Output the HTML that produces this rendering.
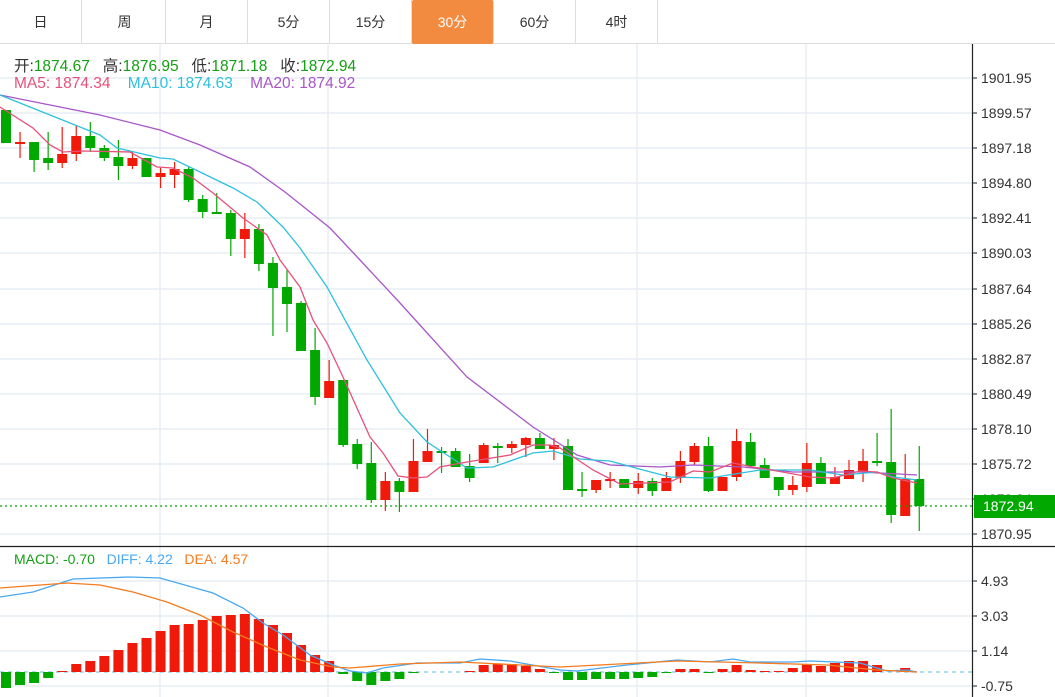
<!DOCTYPE html>
<html><head><meta charset="utf-8"><style>
body{margin:0;width:1055px;height:697px;overflow:hidden;background:#fff;font-family:"Liberation Sans","Noto Sans CJK SC",sans-serif;position:relative}
.tabs{position:absolute;left:0;top:0;height:44px;width:1055px;border-bottom:1px solid #ddd;box-sizing:border-box}
.tab{position:absolute;top:0;height:44px;width:82px;border-right:1px solid #ddd;box-sizing:border-box;text-align:center;line-height:44px;font-size:14px;color:#333}
.tab.on{background:#f28b3f;color:#fff;border-radius:2px}
svg{position:absolute;left:0;top:0}
.lab{position:absolute;font-size:14px;white-space:nowrap}
</style></head><body>
<div class="tabs">
<div class="tab" style="left:0">日</div><div class="tab" style="left:84px">周</div><div class="tab" style="left:166px">月</div><div class="tab" style="left:248px">5分</div><div class="tab" style="left:330px">15分</div><div class="tab on" style="left:412px">30分</div><div class="tab" style="left:494px">60分</div><div class="tab" style="left:576px">4时</div><div class="tab" style="left:658px;border-right:none"></div>
</div>
<svg id="s" width="1055" height="697" viewBox="0 0 1055 697"></svg>
<div class="lab" style="left:14px;top:54px;color:#333;font-size:15.5px">开:<span style="color:#14a014">1874.67</span>&nbsp;&nbsp; 高:<span style="color:#14a014">1876.95</span>&nbsp;&nbsp; 低:<span style="color:#14a014">1871.18</span>&nbsp;&nbsp; 收:<span style="color:#14a014">1872.94</span></div>
<div class="lab" style="left:14px;top:75px;color:#e8507a;font-size:15.5px">MA5: 1874.34&nbsp;&nbsp;&nbsp; <span style="color:#2ec0dc">MA10: 1874.63</span>&nbsp;&nbsp;&nbsp; <span style="color:#a855c8">MA20: 1874.92</span></div>
<div class="lab" style="left:14px;top:551px;color:#14a014">MACD: -0.70&nbsp;&nbsp; <span style="color:#4aa8f0">DIFF: 4.22</span>&nbsp;&nbsp; <span style="color:#f57b20">DEA: 4.57</span></div>
<script>
var s='';
var hl=[78,113,148,183,218,253,289,324,359,394,429,464,499,534];
hl.forEach(function(y){s+='<line x1="0" x2="972" y1="'+y+'" y2="'+y+'" stroke="#e6edf3" stroke-width="1.5"/>';});
[581,616,651,686].forEach(function(y){s+='<line x1="0" x2="972" y1="'+y+'" y2="'+y+'" stroke="#e6edf3" stroke-width="1.5"/>';});
[160,328,637,806].forEach(function(x){s+='<line x1="'+x+'" x2="'+x+'" y1="44" y2="697" stroke="#e6edf3" stroke-width="1.5"/>';});
var C=[['g',110,143,110,143],['r',142,144,132,158],['g',142,160,142,172],['g',158,163,132,170],['r',154,163,127,168],['r',136,154,126,161],['g',136,148,122,152],['g',148,158,145,161],['g',157,166,140,180],['r',158,166,151,169],['g',158,177,158,177],['r',173,177,168,188],['r',169,175,162,188],['g',169,200,167,202],['g',199,212,195,218],['g',212,214,193,214],['g',213,239,210,256],['r',229,239,213,258],['g',229,264,224,271],['g',263,288,257,336],['g',287,304,270,332],['g',303,351,301,351],['g',350,397,328,405],['r',381,398,360,398],['g',380,445,380,447],['g',444,464,439,469],['g',463,500,442,503],['r',481,500,472,511],['g',481,492,478,512],['r',461,492,439,492],['r',451,462,429,462],['g',451,453,447,473],['g',451,467,448,467],['g',466,478,454,482],['r',445,463,443,463],['g',446,448,443,463],['r',444,448,441,453],['r',438,445,437,457],['g',438,449,433,449],['r',445,449,438,460],['g',446,490,439,490],['g',489,490,472,497],['r',480,490,480,493],['r',479,481,472,488],['g',479,488,479,488],['r',481,488,473,494],['g',481,491,478,496],['r',478,491,472,491],['r',461,478,451,483],['r',446,462,443,465],['g',446,491,437,492],['r',477,491,477,491],['r',441,477,429,481],['g',442,466,433,466],['g',465,478,458,478],['g',477,490,477,496],['r',485,490,476,495],['r',463,487,443,492],['g',463,484,457,484],['r',477,484,467,484],['r',470,479,460,479],['r',461,472,449,482],['g',461,463,433,466],['g',462,515,409,523],['r',479,516,454,516],['g',479,506,446,531]];
function X(i){return 6+i*14.05;}
C.forEach(function(c,i){var x=X(i),col=c[0]=='g'?'#00a800':'#f01a0a';
s+='<line x1="'+x+'" x2="'+x+'" y1="'+c[3]+'" y2="'+c[4]+'" stroke="'+col+'" stroke-width="1.2"/>';
var h=Math.max(2,c[2]-c[1]);s+='<rect x="'+(x-5)+'" y="'+c[1]+'" width="10" height="'+h+'" fill="'+col+'"/>';});
function pl(p,col,w){s+='<polyline fill="none" stroke="'+col+'" stroke-width="'+(w||1.3)+'" points="'+p+'"/>';}
pl('0,95 100,115 160,130 200,145 250,167 285,192 330,228 360,260 400,303 467,377 533,427 560,444 577,455 610,465 660,467 693,465 743,467 793,472 860,472 917,475','#a855c8');
pl('0,95 50,115 100,135 117,148 160,158 173,159 200,172 233,188 257,202 283,227 300,248 327,287 367,360 400,413 427,442 467,468 493,467 533,453 553,451 580,459 593,460 610,461 643,470 670,477 710,478 760,470 810,470 843,475 877,472 893,477 917,480','#2ec0dc');
pl('0,107 33,128 50,145 63,152 83,151 130,152 157,167 173,168 193,178 213,193 243,218 267,235 280,260 300,287 313,320 327,343 343,377 370,437 383,453 398,476 413,478 427,477 440,467 467,462 510,455 533,445 550,445 560,448 593,470 620,484 647,483 670,482 693,471 710,472 733,463 753,467 777,471 810,477 833,478 860,471 877,472 893,478 917,483','#e8507a');
s+='<line x1="0" x2="972" y1="506" y2="506" stroke="#00a800" stroke-width="1.3" stroke-dasharray="2,3"/>';
var M=[688,685,683,678,671,664,661,656,650,643,638,631,625,624,620,616,615,614,619,625,633,645,655,661,674,681,685,681,679,673,672,672,672,671,665,664,664,666,669,673,680,680,679,679,679,678,677,673,669,669,673,669,665,670,671,671,668,664,666,663,661,661,665,672,668,672];
s+='<line x1="0" x2="972" y1="672" y2="672" stroke="#7cc8ee" stroke-width="1.2" stroke-dasharray="4,4"/>';
M.forEach(function(y,i){var x=X(i);if(Math.abs(y-672)<1)return;var col=y<672?'#f01a0a':'#00a800';var t=Math.min(y,672),h=Math.abs(y-672);s+='<rect x="'+(x-5)+'" y="'+t+'" width="10" height="'+h+'" fill="'+col+'"/>';});
pl('0,597 33,592 73,579 130,577 160,578 213,593 243,608 263,623 283,635 310,655 333,665 350,671 367,673 383,668 417,663 460,663 480,659 510,661 560,670 577,671 627,665 677,660 710,662 733,659 750,662 793,662 810,661 860,663 887,671 907,670 917,672','#4aa8f0');
pl('0,588 67,583 100,585 133,592 167,602 200,615 233,632 267,647 300,660 333,667 350,668 400,664 460,662 560,667 677,661 760,663 827,665 877,670 917,672','#f57b20');
s+='<line x1="0" x2="1055" y1="546.5" y2="546.5" stroke="#222" stroke-width="1.3"/>';
s+='<line x1="972.5" x2="972.5" y1="44" y2="697" stroke="#222" stroke-width="1.2"/>';
var L=['1901.95','1899.57','1897.18','1894.80','1892.41','1890.03','1887.64','1885.26','1882.87','1880.49','1878.10','1875.72','1873.34','1870.95'];
L.forEach(function(t,i){var y=hl[i];s+='<line x1="972" x2="977" y1="'+y+'" y2="'+y+'" stroke="#222"/><text x="981" y="'+(y+5)+'" font-size="14" fill="#333" font-family="Liberation Sans">'+t+'</text>';});
[['4.93',581],['3.03',616],['1.14',651],['-0.75',686]].forEach(function(a){s+='<line x1="972" x2="977" y1="'+a[1]+'" y2="'+a[1]+'" stroke="#222"/><text x="981" y="'+(a[1]+5)+'" font-size="14" fill="#333" font-family="Liberation Sans">'+a[0]+'</text>';});
s+='<rect x="974" y="495" width="81" height="23" fill="#00a800"/><text x="983" y="511" font-size="14" fill="#fff" font-family="Liberation Sans">1872.94</text>';
document.getElementById('s').innerHTML=s;
</script>
</body></html>
